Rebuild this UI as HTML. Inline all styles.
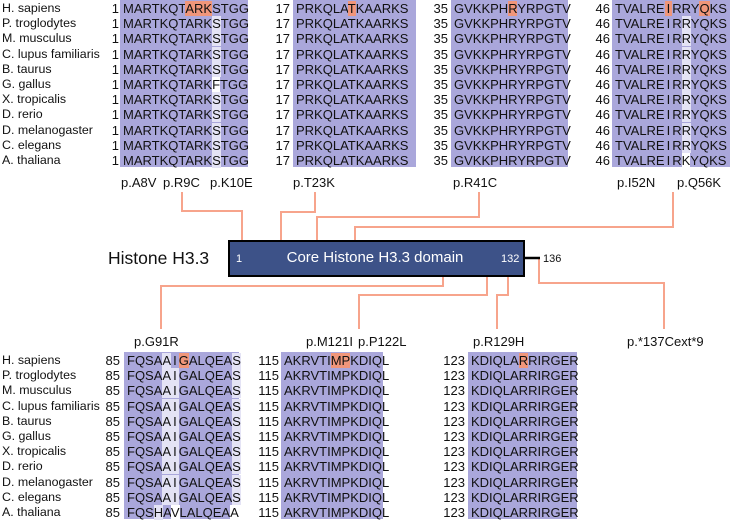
<!DOCTYPE html>
<html><head><meta charset="utf-8"><style>
*{margin:0;padding:0;box-sizing:border-box}
body{width:730px;height:519px;background:#fff;position:relative;overflow:hidden;font-family:"Liberation Sans",Arial,sans-serif;color:#111}
.col{position:absolute;font-size:13px;line-height:15.2px;white-space:pre}
.nm{font-size:12.4px}
.num{text-align:right}
.box{background:#aaa7db;padding:1px 0 0 3px}
.o{background:#f0967a}
.l{background:#e4e3f5}
.w{background:#fff}
.i{padding:0 2px}
.lab{position:absolute;font-size:13px;line-height:15px;white-space:nowrap}
svg{position:absolute;left:0;top:0}
</style></head><body>

<div class="col nm" style="left:2px;top:0;padding-top:1px">H. sapiens<br>P. troglodytes<br>M. musculus<br>C. lupus familiaris<br>B. taurus<br>G. gallus<br>X. tropicalis<br>D. rerio<br>D. melanogaster<br>C. elegans<br>A. thaliana</div>
<div class="col num" style="left:100px;width:19px;top:0;padding-top:1px">1<br>1<br>1<br>1<br>1<br>1<br>1<br>1<br>1<br>1<br>1</div>
<div class="col box" style="left:120px;top:0;width:128px;height:167px">MARTKQT<span class="o">ARK</span>STGG<br>MARTKQTARK<span class="l">S</span>TGG<br>MARTKQTARK<span class="l">S</span>TGG<br>MARTKQTARK<span class="l">S</span>TGG<br>MARTKQTARK<span class="l">S</span>TGG<br>MARTKQTARK<span class="w">F</span>TGG<br>MARTKQTARK<span class="l">S</span>TGG<br>MARTKQTARK<span class="l">S</span>TGG<br>MARTKQTARK<span class="l">S</span>TGG<br>MARTKQTARK<span class="l">S</span>TGG<br>MARTKQTARK<span class="l">S</span>TGG</div>

<div class="col num" style="left:270px;width:20px;top:0;padding-top:1px">17<br>17<br>17<br>17<br>17<br>17<br>17<br>17<br>17<br>17<br>17</div>
<div class="col box" style="left:293px;top:0;width:123px;height:167px">PRKQLA<span class="o">T</span>KAARKS<br>PRKQLATKAARKS<br>PRKQLATKAARKS<br>PRKQLATKAARKS<br>PRKQLATKAARKS<br>PRKQLATKAARKS<br>PRKQLATKAARKS<br>PRKQLATKAARKS<br>PRKQLATKAARKS<br>PRKQLATKAARKS<br>PRKQLATKAARKS</div>

<div class="col num" style="left:428px;width:20px;top:0;padding-top:1px">35<br>35<br>35<br>35<br>35<br>35<br>35<br>35<br>35<br>35<br>35</div>
<div class="col box" style="left:451px;top:0;width:117px;height:167px">GVKKPH<span class="o">R</span>YRPGTV<br>GVKKPHRYRPGTV<br>GVKKPHRYRPGTV<br>GVKKPHRYRPGTV<br>GVKKPHRYRPGTV<br>GVKKPHRYRPGTV<br>GVKKPHRYRPGTV<br>GVKKPHRYRPGTV<br>GVKKPHRYRPGTV<br>GVKKPHRYRPGTV<br>GVKKPHRYRPGTV</div>

<div class="col num" style="left:590px;width:20px;top:0;padding-top:1px">46<br>46<br>46<br>46<br>46<br>46<br>46<br>46<br>46<br>46<br>46</div>
<div class="col box" style="left:612px;top:0;width:118px;height:167px">TVALRE<span class="i o">I</span>RRY<span class="o">Q</span>KS<br>TVALRE<span class="i">I</span>R<span class="l">R</span>YQKS<br>TVALRE<span class="i">I</span>R<span class="l">R</span>YQKS<br>TVALRE<span class="i">I</span>R<span class="l">R</span>YQKS<br>TVALRE<span class="i">I</span>R<span class="l">R</span>YQKS<br>TVALRE<span class="i">I</span>R<span class="l">R</span>YQKS<br>TVALRE<span class="i">I</span>R<span class="l">R</span>YQKS<br>TVALRE<span class="i">I</span>R<span class="l">R</span>YQKS<br>TVALRE<span class="i">I</span>R<span class="l">R</span>YQKS<br>TVALRE<span class="i">I</span>R<span class="l">R</span>YQKS<br>TVALRE<span class="i">I</span>R<span class="w">K</span>YQKS</div>

<svg width="730" height="519">
<g fill="none" stroke="#f7a48c" stroke-width="2">
<polyline points="182,192 182,211 242,211 242,241"/>
<polyline points="315,192 315,212 281,212 281,241"/>
<polyline points="479,192 479,217 317,217 317,241"/>
<polyline points="673,192 673,227 355,227 355,241"/>
<polyline points="443,276 443,286 161,286 161,329"/>
<polyline points="487,276 487,295 359,295 359,329"/>
<polyline points="508,276 508,295 497,295 497,329"/>
<polyline points="539,258 539,283 664,283 664,329"/>
</g>
<rect x="229" y="241" width="295" height="35" fill="#3d5288" stroke="#000" stroke-width="2"/>
<line x1="524" y1="258" x2="540" y2="258" stroke="#000" stroke-width="2.5"/>
</svg>
<div class="lab" style="left:108px;top:248px;font-size:17.5px;line-height:20px">Histone H3.3</div>
<div class="lab" style="left:236px;top:252px;font-size:11px;color:#fff">1</div>
<div class="lab" style="left:280px;top:249px;font-size:15px;line-height:17px;color:#fff;width:190px;text-align:center">Core Histone H3.3 domain</div>
<div class="lab" style="left:501px;top:252px;font-size:11px;color:#fff">132</div>
<div class="lab" style="left:543px;top:252px;font-size:11px">136</div>

<div class="lab" style="left:121px;top:175px">p.A8V</div>
<div class="lab" style="left:163px;top:175px">p.R9C</div>
<div class="lab" style="left:210px;top:175px">p.K10E</div>
<div class="lab" style="left:293px;top:175px">p.T23K</div>
<div class="lab" style="left:453px;top:175px">p.R41C</div>
<div class="lab" style="left:617px;top:175px">p.I52N</div>
<div class="lab" style="left:677px;top:175px">p.Q56K</div>
<div class="lab" style="left:134px;top:334px">p.G91R</div>
<div class="lab" style="left:306px;top:334px">p.M121I</div>
<div class="lab" style="left:358px;top:334px">p.P122L</div>
<div class="lab" style="left:473px;top:334px">p.R129H</div>
<div class="lab" style="left:627px;top:334px">p.*137Cext*9</div>

<div class="col nm" style="left:2px;top:352px;padding-top:1px">H. sapiens<br>P. troglodytes<br>M. musculus<br>C. lupus familiaris<br>B. taurus<br>G. gallus<br>X. tropicalis<br>D. rerio<br>D. melanogaster<br>C. elegans<br>A. thaliana</div>
<div class="col num" style="left:100px;width:20px;top:352px;padding-top:1px">85<br>85<br>85<br>85<br>85<br>85<br>85<br>85<br>85<br>85<br>85</div>
<div class="col box" style="left:124px;top:352px;width:115px;height:167px">FQSA<span class="l">A</span><span class="i">I</span><span class="o">G</span>ALQEA<span class="l">S</span><br>FQSA<span class="l">A</span><span class="i l">I</span>GALQEA<span class="l">S</span><br>FQSA<span class="l">A</span><span class="i l">I</span>GALQEA<span class="l">S</span><br>FQSA<span class="l">A</span><span class="i l">I</span>GALQEA<span class="l">S</span><br>FQSA<span class="l">A</span><span class="i l">I</span>GALQEA<span class="l">S</span><br>FQSA<span class="l">A</span><span class="i l">I</span>GALQEA<span class="l">S</span><br>FQSA<span class="l">A</span><span class="i l">I</span>GALQEA<span class="l">S</span><br>FQSA<span class="l">A</span><span class="i l">I</span>GALQEA<span class="l">S</span><br>FQSA<span class="l">A</span><span class="i l">I</span>GALQEA<span class="l">S</span><br>FQSA<span class="l">A</span><span class="i l">I</span>GALQEA<span class="l">S</span><br>FQS<span class="l">H</span>A<span class="w">V</span>LALQEA<span class="w">A</span></div>

<div class="col num" style="left:252px;width:27px;top:352px;padding-top:1px">115<br>115<br>115<br>115<br>115<br>115<br>115<br>115<br>115<br>115<br>115</div>
<div class="col box" style="left:281px;top:352px;width:102px;height:167px">AKRVTI<span class="o">MP</span>KDIQL<br>AKRVTIMPKDIQL<br>AKRVTIMPKDIQL<br>AKRVTIMPKDIQL<br>AKRVTIMPKDIQL<br>AKRVTIMPKDIQL<br>AKRVTIMPKDIQL<br>AKRVTIMPKDIQL<br>AKRVTIMPKDIQL<br>AKRVTIMPKDIQL<br>AKRVTIMPKDIQL</div>

<div class="col num" style="left:438px;width:27px;top:352px;padding-top:1px">123<br>123<br>123<br>123<br>123<br>123<br>123<br>123<br>123<br>123<br>123</div>
<div class="col box" style="left:468px;top:352px;width:109px;height:167px">KDIQLA<span class="o">R</span>RIRGER<br>KDIQLARRIRGER<br>KDIQLARRIRGER<br>KDIQLARRIRGER<br>KDIQLARRIRGER<br>KDIQLARRIRGER<br>KDIQLARRIRGER<br>KDIQLARRIRGER<br>KDIQLARRIRGER<br>KDIQLARRIRGER<br>KDIQLARRIRGER</div>
</body></html>
